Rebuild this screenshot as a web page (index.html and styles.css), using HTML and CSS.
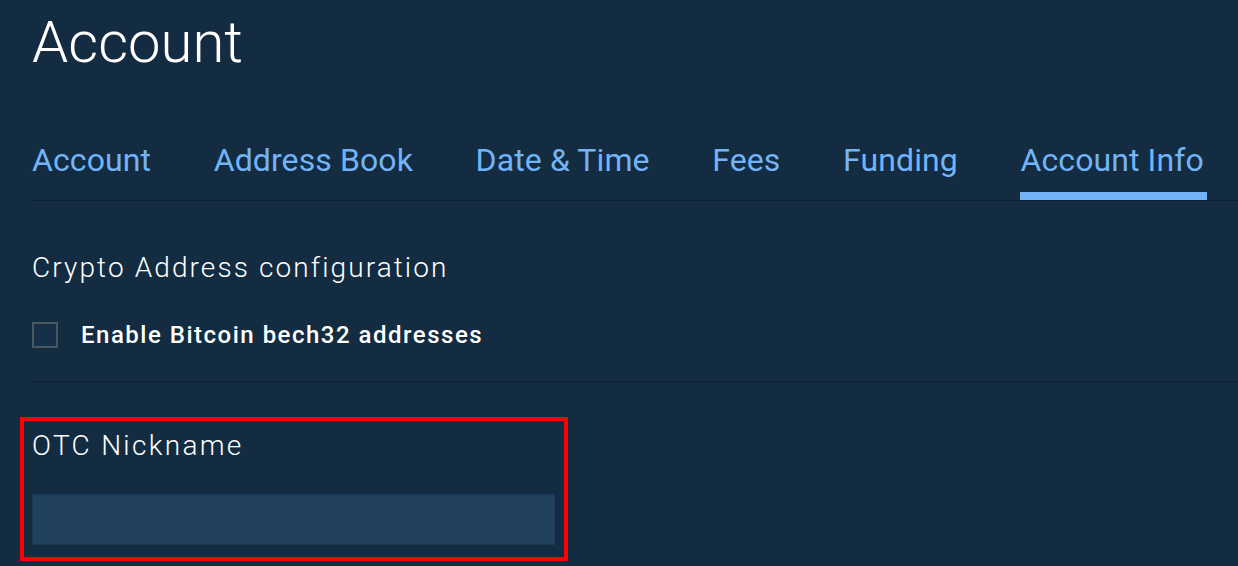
FILE: index.html
```html
<!DOCTYPE html>
<html lang="en">
<head>
    <meta charset="UTF-8">
    <meta name="viewport" content="width=device-width, initial-scale=1.0">
    <title>Account</title>
    <link rel="stylesheet" href="styles.css">
</head>
<body>
    <div class="page">
        <h1>Account</h1>

        <div class="tabs">
            <a href="#" class="tab">Account</a>
            <a href="#" class="tab">Address Book</a>
            <a href="#" class="tab">Date &amp; Time</a>
            <a href="#" class="tab">Fees</a>
            <a href="#" class="tab">Funding</a>
            <a href="#" class="tab active">Account Info</a>
        </div>

        <div class="section">
            <h2>Crypto Address configuration</h2>
            <label class="check-row">
                <input type="checkbox" class="check">
                <span>Enable Bitcoin bech32 addresses</span>
            </label>
        </div>

        <div class="highlight">
            <h2>OTC Nickname</h2>
            <input type="text" class="nickname">
        </div>
    </div>
</body>
</html>
```

FILE: styles.css
```css
body {
    font-family: Roboto, "Noto Sans", sans-serif;
    background-color: #132c42;
    color: #fff;
    margin: 0;
    overflow: hidden;
}
.page {
    padding-left: 32px;
}
h1 {
    font-size: 58px;
    font-weight: 300;
    line-height: 60px;
    margin: 12px 0 0;
}
.tabs {
    display: flex;
    gap: 62.6px;
    margin-top: 69px;
    border-bottom: 1px solid #0d2131;
}
.tab {
    font-size: 32px;
    line-height: 38px;
    letter-spacing: 0.1px;
    color: #72b4f5;
    text-decoration: none;
    padding-bottom: 13px;
    border-bottom: 8px solid transparent;
}
.tab.active {
    border-bottom-color: #72b4f5;
    padding-right: 3px;
}
h2 {
    font-size: 28px;
    font-weight: 300;
    line-height: 34px;
    letter-spacing: 2.1px;
    margin: 0;
}
.section {
    padding: 50px 0 32px;
    border-bottom: 1px solid #0d2131;
}
.check-row {
    display: flex;
    align-items: center;
    gap: 23px;
    margin-top: 36px;
    font-size: 24px;
    font-weight: 500;
    letter-spacing: 1.5px;
}
.check {
    appearance: none;
    width: 26px;
    height: 26px;
    margin: 0;
    border: 2px solid #4b5660;
    background: #16304a;
}
.highlight {
    width: 532px;
    margin: 35px 0 0 -12px;
    padding: 8px 0 12px 8px;
    border: 4px solid #ff0000;
}
.highlight h2 {
    letter-spacing: 2.3px;
}
.nickname {
    display: block;
    width: 523px;
    height: 51px;
    margin-top: 31px;
    box-sizing: border-box;
    background-color: #21415c;
    border: 1px solid #183a58;
}
```
